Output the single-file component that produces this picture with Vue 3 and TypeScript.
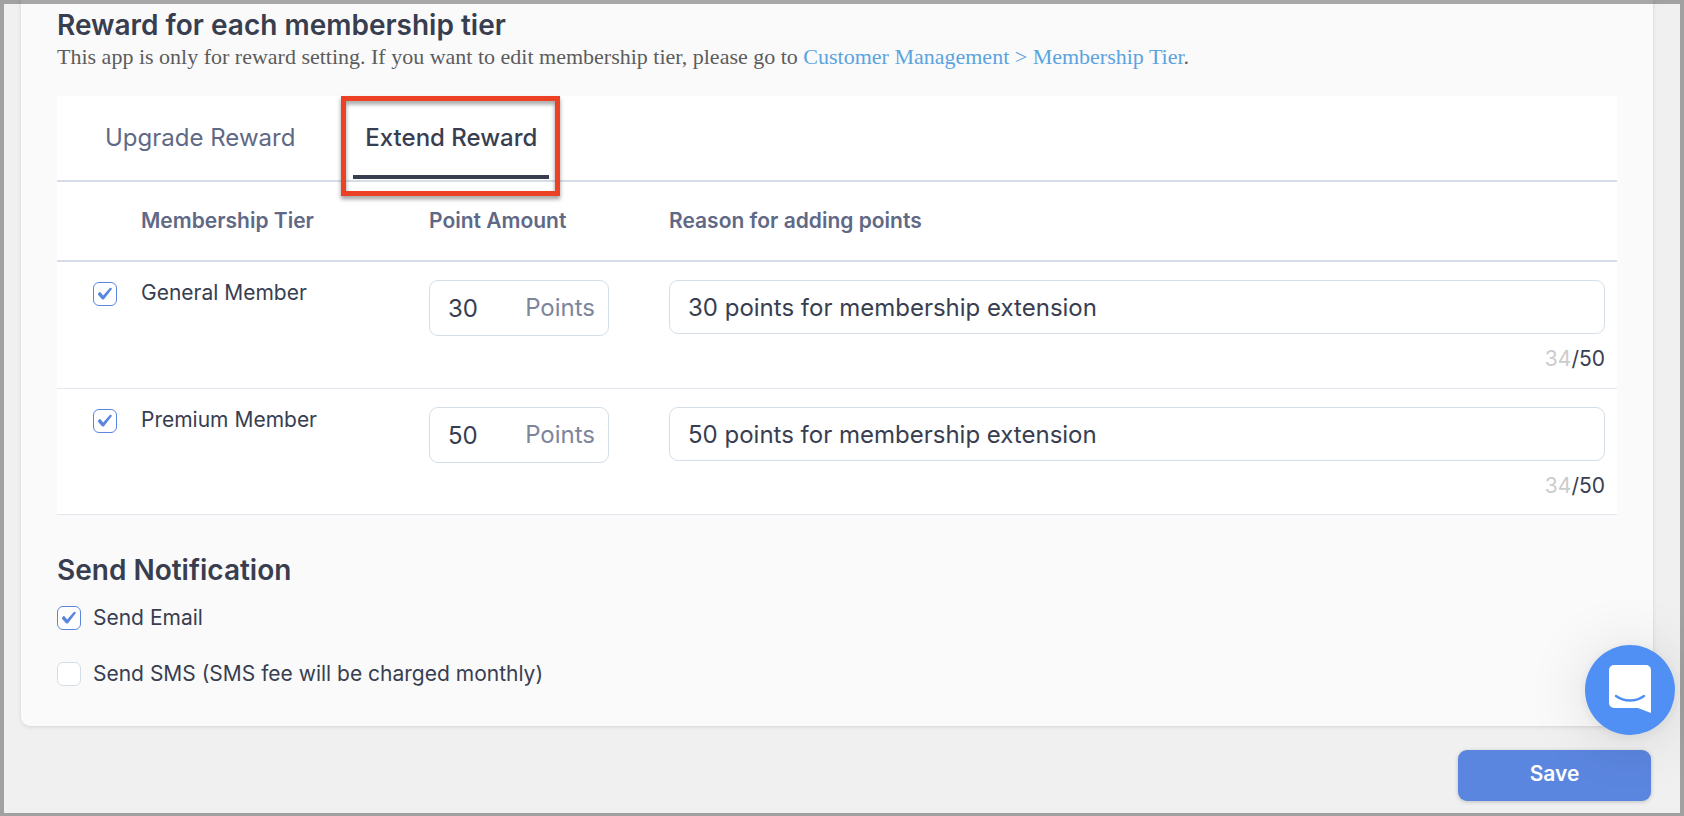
<script setup lang="ts">
import { reactive, ref } from 'vue'

interface Tier {
  id: string
  name: string
  enabled: boolean
  points: string
  reason: string
}

const MAX_REASON = 50

const tabs = ['Upgrade Reward', 'Extend Reward']
const activeTab = ref('Extend Reward')

const tiers = reactive<Tier[]>([
  { id: 'general', name: 'General Member', enabled: true, points: '30', reason: '30 points for membership extension' },
  { id: 'premium', name: 'Premium Member', enabled: true, points: '50', reason: '50 points for membership extension' },
])

const sendEmail = ref(true)
const sendSms = ref(false)
</script>

<template>
  <div class="page">
    <main class="card">
      <h2 class="title">Reward for each membership tier</h2>
      <p class="hint">
        This app is only for reward setting. If you want to edit membership tier, please go to
        <a href="#membership-tier">Customer Management &gt; Membership Tier</a>.
      </p>

      <section class="panel">
        <div class="tabs" role="tablist">
          <button
            v-for="tab in tabs"
            :key="tab"
            type="button"
            role="tab"
            class="tab"
            :class="{ active: tab === activeTab }"
            :aria-selected="tab === activeTab"
            @click="activeTab = tab"
          >
            {{ tab }}
            <span v-if="tab === 'Extend Reward'" class="highlight" aria-hidden="true"></span>
          </button>
        </div>

        <table class="tiers">
          <colgroup>
            <col class="col-check" />
            <col class="col-name" />
            <col class="col-points" />
            <col />
          </colgroup>
          <thead>
            <tr>
              <td></td>
              <th scope="col">Membership Tier</th>
              <th scope="col">Point Amount</th>
              <th scope="col">Reason for adding points</th>
            </tr>
          </thead>
          <tbody>
            <tr v-for="tier in tiers" :key="tier.id">
              <td class="cell-check">
                <input :id="`tier-${tier.id}`" v-model="tier.enabled" type="checkbox" class="check" />
              </td>
              <td>
                <label class="name" :for="`tier-${tier.id}`">{{ tier.name }}</label>
              </td>
              <td>
                <div class="points">
                  <input
                    :id="`points-${tier.id}`"
                    v-model="tier.points"
                    type="text"
                    inputmode="numeric"
                    class="points-input"
                  />
                  <label :for="`points-${tier.id}`">Points</label>
                </div>
              </td>
              <td class="cell-reason">
                <input
                  v-model="tier.reason"
                  type="text"
                  class="reason"
                  :maxlength="MAX_REASON"
                  :aria-label="`Reason for adding points, ${tier.name}`"
                />
                <div class="counter"><span>{{ tier.reason.length }}</span>/{{ MAX_REASON }}</div>
              </td>
            </tr>
          </tbody>
        </table>
      </section>

      <h2 class="title notify-title">Send Notification</h2>
      <div class="options">
        <label class="option">
          <input v-model="sendEmail" type="checkbox" class="check" />
          <span>Send Email</span>
        </label>
        <label class="option">
          <input v-model="sendSms" type="checkbox" class="check" />
          <span>Send SMS (SMS fee will be charged monthly)</span>
        </label>
      </div>
    </main>

    <footer class="actions">
      <button type="button" class="save">Save</button>
    </footer>

    <button type="button" class="chat" aria-label="Open chat">
      <svg width="42" height="48" viewBox="0 0 42 48" aria-hidden="true">
        <path d="M5 0h32a5 5 0 0 1 5 5v43l-13-5H5a5 5 0 0 1-5-5V5a5 5 0 0 1 5-5z" fill="#fff" />
        <path d="M7 31c8 6 20 6 28 0" fill="none" stroke="#5090f4" stroke-width="2.4" stroke-linecap="round" />
      </svg>
    </button>
  </div>
</template>

<style>
body {
  margin: 0;
  background: #f0f0f0;
}
</style>

<style scoped>
.page {
  box-sizing: border-box;
  min-height: 100vh;
  padding: 0 31px 15px 21px;
  background: #f0f0f0;
  color: #383e50;
  font-family: Inter, 'Liberation Sans', sans-serif;
  font-size: 21px;
  line-height: 24px;
}

/* Translucent window edge drawn over the page */
.page::after {
  content: '';
  position: fixed;
  inset: 0;
  z-index: 3;
  border: 4px solid rgba(0, 0, 0, 0.33);
  border-bottom-width: 3px;
  pointer-events: none;
}

.card {
  padding: 5px 36px 40px;
  background: #fafafa;
  border-radius: 0 0 9px 9px;
  box-shadow: 0 1px 4px rgba(0, 0, 0, 0.12);
}

.title {
  margin: 0;
  font-size: 28px;
  line-height: 40px;
  font-weight: 600;
}

.hint {
  margin: 0 0 27px;
  color: #5c5c5c;
  font-family: 'Liberation Serif', serif;
  font-size: 22px;
  line-height: 24px;
}

.hint a {
  color: #5ba3df;
  text-decoration: none;
}

.panel {
  background: #fff;
}

.tabs {
  display: flex;
  align-items: flex-start;
  gap: 46px;
  height: 84px;
  padding-left: 36px;
  border-bottom: 2px solid #d5dee7;
}

.tab {
  position: relative;
  height: 83px;
  padding: 0 12px;
  border: solid transparent;
  border-width: 4px 0;
  background: none;
  color: #5f6986;
  font: inherit;
  font-size: 24px;
}

.tab.active {
  border-bottom-color: #383e50;
  color: #383e50;
  font-weight: 500;
}

.highlight {
  position: absolute;
  inset: -4px -11px -21px -12px;
  border: 5px solid #ed4125;
  filter: drop-shadow(0 3px 2px rgba(0, 0, 0, 0.4));
  pointer-events: none;
}

.tiers {
  width: 100%;
  table-layout: fixed;
  border-spacing: 0;
}

.col-check {
  width: 84px;
}

.col-name {
  width: 288px;
}

.col-points {
  width: 240px;
}

.tiers thead th,
.tiers thead td {
  height: 78px;
  padding: 0;
  border-bottom: 2px solid #d5dee7;
  color: #5f6986;
  font-weight: 600;
  text-align: left;
}

.tiers tbody td {
  padding: 18px 0 0;
  border-bottom: 1px solid #e3e7ed;
  vertical-align: top;
}

.tiers tbody .cell-check {
  padding: 20px 0 0 36px;
}

.tiers tbody .cell-reason {
  padding: 18px 12px 17px 0;
}

.tiers tbody tr:last-child .cell-reason {
  padding-bottom: 16px;
}

.name {
  display: block;
  line-height: 26px;
}

.check {
  display: grid;
  place-items: center;
  flex: none;
  box-sizing: border-box;
  width: 24px;
  height: 24px;
  margin: 0;
  border: 1px solid #d5dee7;
  border-radius: 6px;
  background: #fff;
  appearance: none;
}

.check:checked {
  border-color: #5b86df;
}

.check:checked::before {
  content: '';
  width: 16px;
  height: 14px;
  background: #5b86df;
  clip-path: path('M1.2 6.2L3 4.8L6.2 8.6L12.8 0.9Q14.5 0.2 14.9 2L7 12.2Q6 13 5 12.2L1.2 8Q0.6 7 1.2 6.2Z');
}

.points {
  display: flex;
  align-items: center;
  box-sizing: border-box;
  width: 180px;
  height: 56px;
  padding: 0 13px 0 18px;
  border: 1px solid #d5dee7;
  border-radius: 9px;
  color: #7d859b;
  font-size: 24px;
}

.points-input {
  flex: 1;
  min-width: 0;
  padding: 0;
  border: 0;
  background: none;
  color: #383e50;
  font: inherit;
  outline: none;
}

.reason {
  display: block;
  box-sizing: border-box;
  width: 100%;
  height: 54px;
  padding: 0 18px;
  border: 1px solid #d5dee7;
  border-radius: 9px;
  background: #fff;
  color: #383e50;
  font: inherit;
  font-size: 24px;
}

.counter {
  margin-top: 13px;
  text-align: right;
}

.counter span {
  color: #cccccc;
}

.notify-title {
  margin: 35px 0 16px;
}

.options {
  display: grid;
  justify-items: start;
  gap: 32px;
}

.option {
  display: flex;
  align-items: center;
  gap: 12px;
}

.actions {
  display: flex;
  justify-content: flex-end;
  margin-top: 24px;
  padding-right: 2px;
}

.save {
  width: 193px;
  height: 51px;
  padding: 0 0 3px;
  border: 0;
  border-radius: 9px;
  background: #5b86df;
  box-shadow: 0 1px 4px rgba(0, 0, 0, 0.2);
  color: #fff;
  font: inherit;
  font-weight: 600;
}

.chat {
  position: fixed;
  right: 9px;
  bottom: 81px;
  z-index: 2;
  display: flex;
  align-items: center;
  justify-content: center;
  width: 90px;
  height: 90px;
  padding: 0 0 2px;
  border: 0;
  border-radius: 50%;
  background: #5090f4;
  box-shadow: 0 2px 12px rgba(0, 0, 0, 0.08), 0 4px 64px rgba(0, 0, 0, 0.12);
}
</style>
